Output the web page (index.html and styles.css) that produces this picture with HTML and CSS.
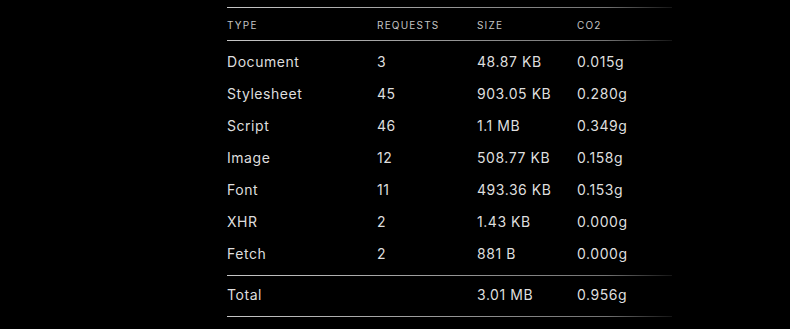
FILE: index.html
```html
<!DOCTYPE html>
<html lang="en">
<head>
<meta charset="utf-8">
<title>Requests</title>
<link rel="stylesheet" href="styles.css">
</head>
<body>
<div class="table">
  <div class="row head">
    <div>Type</div><div>Requests</div><div>Size</div><div>CO2</div>
  </div>
  <div class="body">
    <div class="row"><div>Document</div><div>3</div><div>48.87 KB</div><div>0.015g</div></div>
    <div class="row"><div>Stylesheet</div><div>45</div><div>903.05 KB</div><div>0.280g</div></div>
    <div class="row"><div>Script</div><div>46</div><div>1.1 MB</div><div>0.349g</div></div>
    <div class="row"><div>Image</div><div>12</div><div>508.77 KB</div><div>0.158g</div></div>
    <div class="row"><div>Font</div><div>11</div><div>493.36 KB</div><div>0.153g</div></div>
    <div class="row"><div>XHR</div><div>2</div><div>1.43 KB</div><div>0.000g</div></div>
    <div class="row"><div>Fetch</div><div>2</div><div>881 B</div><div>0.000g</div></div>
  </div>
  <div class="row total">
    <div>Total</div><div></div><div>3.01 MB</div><div>0.956g</div>
  </div>
</div>
</body>
</html>
```
FILE: styles.css
```css
html, body {
  margin: 0;
  background: #000;
}
body {
  padding: 7px 0 0 227px;
  font-family: Inter, "Noto Sans", sans-serif;
  color: #dedede;
}
.table {
  width: 445px;
  display: flex;
  flex-direction: column;
}
.row {
  display: grid;
  grid-template-columns: 150px 100px 100px 95px;
  align-items: center;
  height: 32px;
  font-size: 14px;
  letter-spacing: 0.55px;
}
.head {
  height: 32px;
  font-size: 10px;
  letter-spacing: 1.2px;
  text-transform: uppercase;
  color: #c4c4c4;
  border-top: 1px solid transparent;
  border-bottom: 1px solid transparent;
  border-image: linear-gradient(to right, rgba(255,255,255,0.78), rgba(255,255,255,0.45) 85%, rgba(255,255,255,0.08)) 1;
}
.head > div {
  padding-top: 1px;
}
.body {
  padding: 4px 0 6px;
}
.total {
  height: 40px;
  border-top: 1px solid transparent;
  border-bottom: 1px solid transparent;
  border-image: linear-gradient(to right, rgba(255,255,255,0.78), rgba(255,255,255,0.45) 85%, rgba(255,255,255,0.08)) 1;
}
.total > div {
  padding-bottom: 3px;
}
```
